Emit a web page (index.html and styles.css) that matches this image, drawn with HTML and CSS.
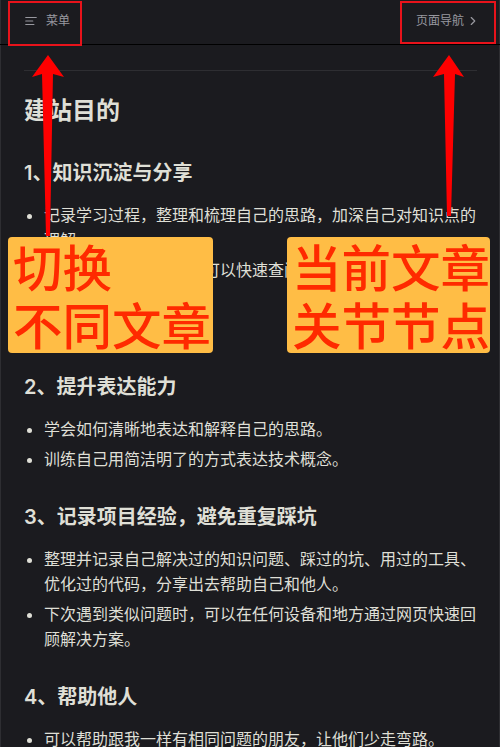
FILE: index.html
```html
<!DOCTYPE html>
<html lang="zh-CN">
<head>
<meta charset="utf-8">
<title>建站目的</title>
<link rel="stylesheet" href="styles.css">
</head>
<body>
<div class="page">
  <header class="localnav">
    <button class="nav-btn menu">
      <svg class="menu-icon" viewBox="0 0 24 24" aria-hidden="true"><path d="M21 6H3M15 12H3M17 18H3"/></svg>
      <span>菜单</span>
    </button>
    <button class="nav-btn outline">
      <span>页面导航</span>
      <svg class="chev" viewBox="0 0 24 24" aria-hidden="true"><path d="m9 18 6-6-6-6"/></svg>
    </button>
  </header>

  <main class="doc">
    <div class="divider"></div>
    <h1>建站目的</h1>

    <h2>1、知识沉淀与分享</h2>
    <ul class="list list-first">
      <li>记录学习过程，整理和梳理自己的思路，加深自己对知识点的理解。</li>
      <li>将知识系统化地沉淀，可以快速查阅和复习，方便随时随地温故而知新。</li>
      <li>构建个人知识库。</li>
    </ul>

    <h2>2、提升表达能力</h2>
    <ul class="list">
      <li>学会如何清晰地表达和解释自己的思路。</li>
      <li>训练自己用简洁明了的方式表达技术概念。</li>
    </ul>

    <h2>3、记录项目经验，避免重复踩坑</h2>
    <ul class="list">
      <li>整理并记录自己解决过的知识问题、踩过的坑、用过的工具、优化过的代码，分享出去帮助自己和他人。</li>
      <li>下次遇到类似问题时，可以在任何设备和地方通过网页快速回顾解决方案。</li>
    </ul>

    <h2>4、帮助他人</h2>
    <ul class="list">
      <li>可以帮助跟我一样有相同问题的朋友，让他们少走弯路。</li>
    </ul>
  </main>

  <div class="frame frame-left"></div>
  <div class="frame frame-right"></div>

  <svg class="arrows" viewBox="0 0 500 747" aria-hidden="true">
    <polygon points="48,55 64,77 53,74 50,236 46,236 42,74 32,77"/>
    <polygon points="449,55 464,77 455,74 451,216 447,216 444,74 433,77"/>
  </svg>

  <div class="tag tag-left">切换<br>不同文章</div>
  <div class="tag tag-right">当前文章<br>关节节点</div>
</div>
</body>
</html>
```

FILE: styles.css
```css
* {
  box-sizing: border-box;
}

html {
  overflow: hidden;
}

body {
  margin: 0;
  background: #1b1b1f;
  color: #dfdfd6;
  font-family: Inter, "Noto Sans CJK SC", sans-serif;
}

.page {
  position: relative;
  width: 500px;
  min-height: 747px;
  box-shadow: inset 1px 0 0 #2e2e32, inset -1px 0 0 #2e2e32;
}

/* local nav */
.localnav {
  height: 45px;
  display: flex;
  justify-content: space-between;
  align-items: center;
  padding-bottom: 3px;
  border-bottom: 1px solid #000;
}

.nav-btn {
  display: flex;
  align-items: center;
  background: none;
  border: 0;
  margin: 0;
  color: #98989f;
  font-family: inherit;
  font-size: 12px;
  line-height: 24px;
  cursor: pointer;
}

.menu {
  padding: 0 0 0 24px;
}

.menu-icon {
  width: 14px;
  height: 14px;
  margin-right: 8px;
  fill: none;
  stroke: currentColor;
  stroke-width: 2;
  stroke-linecap: round;
}

.outline {
  padding: 0 20px 0 0;
}

.chev {
  width: 14px;
  height: 14px;
  margin-left: 2px;
  fill: none;
  stroke: currentColor;
  stroke-width: 2;
  stroke-linecap: round;
  stroke-linejoin: round;
}

/* doc */
.doc {
  display: flow-root;
  padding: 0 23px 0 24px;
}

.divider {
  margin-top: 25px;
  height: 1px;
  background: #2e2e32;
}

h1 {
  margin: 24px 0 32px;
  font-size: 24px;
  line-height: 32px;
  font-weight: 600;
}

h2 {
  margin: 31px 0 0;
  font-size: 20px;
  line-height: 28px;
  font-weight: 600;
}

.list {
  margin: 16px 0 0;
  padding-left: 20px;
  font-size: 16px;
  line-height: 25px;
}

.list li + li {
  margin-top: 5px;
}

.list-first {
  padding-bottom: 4px;
}

/* annotations */
.frame {
  position: absolute;
  border: 2px solid #e8131b;
}

.frame-left {
  left: 8px;
  top: 1px;
  width: 74px;
  height: 45px;
}

.frame-right {
  left: 400px;
  top: 1px;
  width: 96px;
  height: 43px;
}

.arrows {
  position: absolute;
  left: 0;
  top: 0;
  width: 500px;
  height: 747px;
  pointer-events: none;
}

.arrows polygon {
  fill: #ff0000;
}

.tag {
  position: absolute;
  top: 237px;
  height: 116px;
  padding: 0 0 0 5px;
  background: #ffbd45;
  border-radius: 4px;
  color: #ff2a00;
  font-family: "Noto Sans CJK SC", sans-serif;
  font-size: 49.5px;
  font-weight: 500;
  line-height: 57.5px;
  white-space: nowrap;
  overflow: hidden;
}

.tag-left {
  left: 8px;
  width: 205px;
}

.tag-right {
  left: 287px;
  width: 203px;
}
```
